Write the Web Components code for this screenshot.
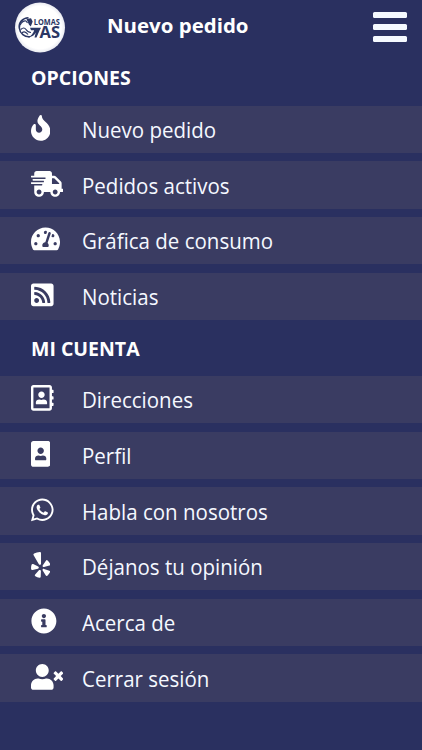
<!DOCTYPE html>
<html lang="es">
<head>
<meta charset="utf-8">
<title>Nuevo pedido</title>
<style>
html,body{margin:0;height:100%;background:#2a3060}
body{font-family:"Open Sans","Noto Sans",sans-serif;color:#fff;overflow:hidden}
</style>
</head>
<body>
<gas-menu>
  <gas-header>Nuevo pedido</gas-header>
  <menu-group label="OPCIONES">
    <menu-item icon="fire">Nuevo pedido</menu-item>
    <menu-item icon="truck">Pedidos activos</menu-item>
    <menu-item icon="gauge">Gráfica de consumo</menu-item>
    <menu-item icon="rss">Noticias</menu-item>
  </menu-group>
  <menu-group label="MI CUENTA">
    <menu-item icon="book">Direcciones</menu-item>
    <menu-item icon="portrait">Perfil</menu-item>
    <menu-item icon="whatsapp">Habla con nosotros</menu-item>
    <menu-item icon="yelp">Déjanos tu opinión</menu-item>
    <menu-item icon="info">Acerca de</menu-item>
    <menu-item icon="userx">Cerrar sesión</menu-item>
  </menu-group>
</gas-menu>
<script>
const ICONS={
fire:[384,'M216 23.86c0-23.8-30.65-32.77-44.15-13.04C48 191.85 224 200 224 288c0 35.63-29.11 64.46-64.85 63.99-35.17-.45-63.15-29.77-63.15-64.94v-85.51c0-21.7-26.47-32.23-41.43-16.5C27.8 213.16 0 261.33 0 320c0 105.87 86.13 192 192 192s192-86.13 192-192c0-170.29-168-193-168-296.14z'],
truck:[640,'M624 352h-16V243.9c0-12.7-5.1-24.9-14.1-33.9L494 110.1c-9-9-21.2-14.1-33.9-14.1H416V48c0-26.5-21.5-48-48-48H112C85.5 0 64 21.5 64 48v48H8c-4.4 0-8 3.6-8 8v16c0 4.4 3.6 8 8 8h272c4.4 0 8 3.6 8 8v16c0 4.4-3.6 8-8 8H40c-4.4 0-8 3.6-8 8v16c0 4.4 3.6 8 8 8h208c4.4 0 8 3.6 8 8v16c0 4.4-3.6 8-8 8H8c-4.4 0-8 3.6-8 8v16c0 4.4 3.6 8 8 8h208c4.4 0 8 3.6 8 8v16c0 4.4-3.6 8-8 8H64v128c0 53 43 96 96 96s96-43 96-96h128c0 53 43 96 96 96s96-43 96-96h48c8.8 0 16-7.2 16-16v-32c0-8.8-7.2-16-16-16zM160 464c-26.5 0-48-21.5-48-48s21.5-48 48-48 48 21.5 48 48-21.5 48-48 48zm320 0c-26.5 0-48-21.5-48-48s21.5-48 48-48 48 21.5 48 48-21.5 48-48 48zm80-208H416V144h44.1l99.9 99.9V256z'],
gauge:[576,'M288 32C128.94 32 0 160.94 0 320c0 52.8 14.25 102.26 39.06 144.8 5.61 9.62 16.3 15.2 27.44 15.2h443c11.14 0 21.83-5.58 27.44-15.2C561.75 422.26 576 372.8 576 320c0-159.06-128.94-288-288-288zm0 64c14.71 0 26.58 10.13 30.32 23.65-1.11 2.26-2.64 4.23-3.45 6.67l-9.22 27.67c-5.13 3.49-10.97 6.01-17.64 6.01-17.67 0-32-14.33-32-32S270.33 96 288 96zM96 384c-17.67 0-32-14.33-32-32s14.33-32 32-32 32 14.33 32 32-14.33 32-32 32zm48-160c-17.67 0-32-14.33-32-32s14.33-32 32-32 32 14.33 32 32-14.33 32-32 32zm246.77-72.41l-61.33 184C343.13 347.33 352 364.54 352 384c0 11.72-3.38 22.55-8.88 32H232.88c-5.5-9.45-8.88-20.28-8.88-32 0-33.94 26.5-61.43 59.9-63.59l61.34-184.01c4.17-12.56 17.73-19.45 30.36-15.17 12.57 4.19 19.35 17.79 15.17 30.36zm14.66 57.2l15.52-46.55c3.47-1.29 7.13-2.23 11.05-2.23 17.67 0 32 14.33 32 32s-14.33 32-32 32c-11.38-.01-20.89-6.28-26.57-15.22zM480 384c-17.67 0-32-14.33-32-32s14.33-32 32-32 32 14.33 32 32-14.33 32-32 32z'],
rss:[448,'M400 32H48C21.49 32 0 53.49 0 80v352c0 26.51 21.49 48 48 48h352c26.51 0 48-21.49 48-48V80c0-26.51-21.49-48-48-48zM112 416c-26.51 0-48-21.49-48-48s21.49-48 48-48 48 21.49 48 48-21.49 48-48 48zm157.533 0h-34.335c-6.011 0-11.051-4.636-11.442-10.634-5.214-80.05-69.243-143.92-149.123-149.123-5.997-.39-10.633-5.431-10.633-11.441v-34.335c0-6.535 5.468-11.777 11.994-11.425 110.546 5.974 198.997 94.536 204.964 204.964.352 6.526-4.89 11.994-11.425 11.994zm103.027 0h-34.334c-6.161 0-11.175-4.882-11.427-11.038-5.598-136.535-115.204-246.161-251.76-251.76C68.882 152.949 64 147.935 64 141.774V107.44c0-6.454 5.338-11.664 11.787-11.432 167.83 6.025 302.21 141.191 308.205 308.205.232 6.449-4.978 11.787-11.432 11.787z'],
book:[448,'M436 160c6.6 0 12-5.4 12-12v-40c0-6.6-5.4-12-12-12h-20V48c0-26.5-21.5-48-48-48H48C21.5 0 0 21.5 0 48v416c0 26.5 21.5 48 48 48h320c26.5 0 48-21.5 48-48v-48h20c6.6 0 12-5.4 12-12v-40c0-6.6-5.4-12-12-12h-20v-64h20c6.6 0 12-5.4 12-12v-40c0-6.6-5.4-12-12-12h-20v-64h20zm-68 304H48V48h320v416zM208 256c35.3 0 64-28.7 64-64s-28.7-64-64-64-64 28.7-64 64 28.7 64 64 64zm-89.6 128h179.2c12.4 0 22.4-8.6 22.4-19.2v-19.2c0-31.8-30.1-57.6-67.2-57.6-10.8 0-18.7 8-44.8 8-26.9 0-33.4-8-44.8-8-37.1 0-67.2 25.8-67.2 57.6v19.2c0 10.6 10 19.2 22.4 19.2z'],
portrait:[384,'M336 0H48C21.5 0 0 21.5 0 48v416c0 26.5 21.5 48 48 48h288c26.5 0 48-21.5 48-48V48c0-26.5-21.5-48-48-48zM192 128c35.3 0 64 28.7 64 64s-28.7 64-64 64-64-28.7-64-64 28.7-64 64-64zm112 236.8c0 10.6-10 19.2-22.4 19.2H102.4C90 384 80 375.4 80 364.8v-19.2c0-31.8 30.1-57.6 67.2-57.6h5c12.3 5.1 25.7 8 39.8 8s27.6-2.9 39.8-8h5c37.1 0 67.2 25.8 67.2 57.6v19.2z'],
whatsapp:[448,'M380.9 97.1C339 55.1 283.2 32 223.9 32c-122.4 0-222 99.6-222 222 0 39.1 10.2 77.3 29.6 111L0 480l117.7-30.9c32.4 17.7 68.9 27 106.1 27h.1c122.3 0 224.1-99.6 224.1-222 0-59.3-25.2-115-67.1-157zm-157 341.6c-33.2 0-65.7-8.9-94-25.7l-6.7-4-69.8 18.3L72 359.2l-4.4-7c-18.5-29.4-28.2-63.3-28.2-98.2 0-101.7 82.8-184.5 184.6-184.5 49.3 0 95.6 19.2 130.4 54.1 34.8 34.9 56.2 81.2 56.1 130.5 0 101.8-84.9 184.6-186.6 184.6zm101.2-138.2c-5.5-2.8-32.8-16.2-37.9-18-5.1-1.9-8.8-2.8-12.5 2.8-3.7 5.6-14.3 18-17.6 21.8-3.2 3.7-6.5 4.2-12 1.4-32.6-16.3-54-29.1-75.5-66-5.7-9.8 5.7-9.1 16.3-30.3 1.8-3.7.9-6.9-.5-9.7-1.4-2.8-12.5-30.1-17.1-41.2-4.5-10.8-9.1-9.3-12.5-9.5-3.2-.2-6.9-.2-10.6-.2-3.7 0-9.7 1.4-14.8 6.9-5.1 5.6-19.4 19-19.4 46.3 0 27.3 19.9 53.7 22.6 57.4 2.8 3.7 39.1 59.7 94.8 83.8 35.2 15.2 49 16.5 66.6 13.9 10.7-1.6 32.8-13.4 37.4-26.4 4.6-13 4.6-24.1 3.2-26.4-1.3-2.5-5-3.9-10.5-6.6z'],
yelp:[384,'M42.9 240.32l99.62 48.61c19.2 9.4 16.2 37.51-4.5 42.71L30.5 358.45a22.79 22.79 0 0 1-28.21-19.6 197.16 197.16 0 0 1 9-85.32 22.8 22.8 0 0 1 31.61-13.21zm44 239.25a199.45 199.45 0 0 0 79.42 32.11A22.78 22.78 0 0 0 192.94 490l3.9-110.82c.7-21.3-25.5-31.91-39.81-16.1l-74.21 82.4a22.82 22.82 0 0 0 4.09 34.09zm145.34-109.92l58.81 94a22.93 22.93 0 0 0 34 5.5 198.36 198.36 0 0 0 52.71-67.61A23 23 0 0 0 364.17 370l-105.42-34.26c-20.31-6.5-37.81 15.8-26.51 33.91zm148.33-132.23a197.44 197.44 0 0 0-50.41-69.31 22.85 22.85 0 0 0-34 4.4l-62 91.92c-11.9 17.7 4.7 40.61 25.2 34.71L366 268.63a23 23 0 0 0 14.61-31.21zM62.11 30.18a22.86 22.86 0 0 0-9.9 32l104.12 180.44c11.7 20.2 42.61 11.9 42.61-11.4V22.88a22.67 22.67 0 0 0-24.5-22.8 320.37 320.37 0 0 0-112.33 30.1z'],
info:[512,'M256 8C119.043 8 8 119.083 8 256c0 136.997 111.043 248 248 248s248-111.003 248-248C504 119.083 392.957 8 256 8zm0 110c23.196 0 42 18.804 42 42s-18.804 42-42 42-42-18.804-42-42 18.804-42 42-42zm56 254c0 6.627-5.373 12-12 12h-88c-6.627 0-12-5.373-12-12v-24c0-6.627 5.373-12 12-12h12v-64h-12c-6.627 0-12-5.373-12-12v-24c0-6.627 5.373-12 12-12h64c6.627 0 12 5.373 12 12v100h12c6.627 0 12 5.373 12 12v24z'],
userx:[640,'M224 256c70.7 0 128-57.3 128-128S294.7 0 224 0 96 57.3 96 128s57.3 128 128 128zm89.6 32h-16.7c-22.2 10.2-46.9 16-72.9 16s-50.6-5.8-72.9-16h-16.7C60.2 288 0 348.2 0 422.4V464c0 26.5 21.5 48 48 48h352c26.5 0 48-21.5 48-48v-41.6c0-74.2-60.2-134.4-134.4-134.4zM589.6 240l45.6-45.6c6.3-6.3 6.3-16.5 0-22.8l-22.8-22.8c-6.3-6.3-16.5-6.3-22.8 0L544 194.4l-45.6-45.6c-6.3-6.3-16.5-6.3-22.8 0l-22.8 22.8c-6.3 6.3-6.3 16.5 0 22.8l45.6 45.6-45.6 45.6c-6.3 6.3-6.3 16.5 0 22.8l22.8 22.8c6.3 6.3 16.5 6.3 22.8 0l45.6-45.6 45.6 45.6c6.3 6.3 16.5 6.3 22.8 0l22.8-22.8c6.3-6.3 6.3-16.5 0-22.8L589.6 240z']
};
const define=(name,render)=>customElements.define(name,class extends HTMLElement{
  connectedCallback(){
    if(this.shadowRoot)return;
    this.attachShadow({mode:'open'}).innerHTML=render(this);
  }
});
define('gas-logo',()=>`<style>:host{display:block;width:52px;height:52px}svg{display:block}</style>
<svg width="52" height="52" viewBox="0 0 52 52" role="img" aria-label="Lomas Gas">
  <defs><radialGradient id="disc"><stop offset=".85" stop-color="#fff"/><stop offset="1" stop-color="#e9eaf1"/></radialGradient></defs>
  <circle cx="26" cy="26.500" r="25" fill="url(#disc)"/>
  <g fill="none" stroke="#2b3764">
    <path d="M14.500 16.700C8.500 17 4.600 21.500 5.300 27 6 32.800 10.500 36.200 16 35.700" stroke-width="1.600"/>
    <path d="M6.200 24Q8.500 19.500 12 20L13.500 22M6.700 28.500Q10 25.500 12 28.500T17 31.500M8 31.800Q11 29.500 14 33.500" stroke-width="1.200"/>
  </g>
  <path d="M12.500 18L17 17.300 18.700 20.500 16.800 25.500 15 23.700ZM16 26.800H27L25.500 29.500L22.500 36.500H20.500L21.800 31.500Q19.500 36 13.500 36.700 19 34 20.200 29.300H17Z" fill="#2b3764"/>
  <g fill="#2b3764" font-family="Open Sans" font-weight="700">
    <text x="19.800" y="24" font-size="8.600" textLength="26" lengthAdjust="spacingAndGlyphs">LOMAS</text>
    <text x="25.500" y="37" font-size="15.800" textLength="20.500" lengthAdjust="spacingAndGlyphs">AS</text>
  </g>
</svg>`);
define('menu-button',()=>`<style>:host{display:grid;gap:5.500px;width:34px}i{height:6.500px;border-radius:1.500px;background:#f5f9ff}</style><i></i><i></i><i></i>`);
define('gas-header',()=>`<style>
:host{display:flex;align-items:center;height:54px;padding:0 15px 0 14px;box-sizing:border-box}
h1{flex:1;margin:0 0 4px 41px;font-size:20.450px;line-height:28px;font-weight:700;white-space:nowrap}</style>
<gas-logo></gas-logo><h1><slot></slot></h1><menu-button></menu-button>`);
define('menu-group',el=>`<style>
:host{display:block}
h2{margin:0;padding:var(--top,10px) 0 0 31px;box-sizing:border-box;height:var(--head,51.700px);font-size:19.500px;line-height:28px;font-weight:700}
nav{display:grid;gap:8.350px}</style>
<h2>${el.getAttribute('label')}</h2><nav><slot></slot></nav>`);
define('menu-item',el=>{
  const [w,d]=ICONS[el.getAttribute('icon')];
  return `<style>
:host{display:flex;height:47.350px;padding-left:31px;background:#3a3c62;align-items:center;font-size:20.500px;line-height:28px;color:#f5f8ff}
.icon{width:51px;height:28.500px}svg{display:block;height:25.800px;fill:#fff}
span{padding-top:.8px;white-space:nowrap;transform:scaleY(1.045);transform-origin:0 75%}</style>
<div class="icon"><svg viewBox="0 0 ${w} 512" width="${w*25.8/512}" aria-hidden="true"><path d="${d}"/></svg></div><span><slot></slot></span>`});
define('gas-menu',()=>`<style>:host{display:block}::slotted(menu-group:nth-of-type(2)){--head:55.900px;--top:14.500px}</style><slot></slot>`);
</script>
</body>
</html>
